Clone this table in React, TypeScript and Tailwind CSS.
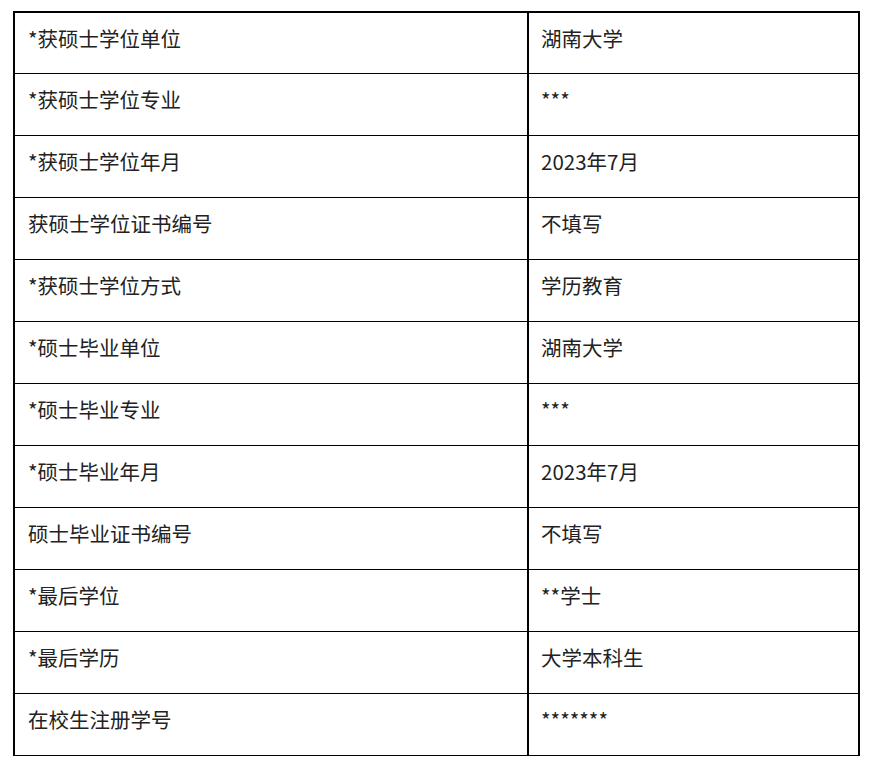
const rows: [string, string][] = [
  ['*获硕士学位单位', '湖南大学'],
  ['*获硕士学位专业', '***'],
  ['*获硕士学位年月', '2023年7月'],
  ['获硕士学位证书编号', '不填写'],
  ['*获硕士学位方式', '学历教育'],
  ['*硕士毕业单位', '湖南大学'],
  ['*硕士毕业专业', '***'],
  ['*硕士毕业年月', '2023年7月'],
  ['硕士毕业证书编号', '不填写'],
  ['*最后学位', '**学士'],
  ['*最后学历', '大学本科生'],
  ['在校生注册学号', '*******'],
];

export default function App() {
  return (
    <div className="min-h-screen bg-white pt-[11px] pl-[13px] font-['Noto_Sans_CJK_SC',sans-serif] text-[20.5px] leading-[30px] text-[#222]">
      <div className="w-[847px] border-x-2 border-t-2 border-b border-black">
        {rows.map(([label, value], i) => (
          <div
            key={i}
            className={
              i === 0
                ? 'flex h-[60px]'
                : 'flex h-[62px] border-t border-black'
            }
          >
            <div className="w-[514px] shrink-0 border-r-2 border-black pl-[13px] pt-[10px]">
              {label}
            </div>
            <div className="flex-1 pl-[12px] pt-[10px]">{value}</div>
          </div>
        ))}
      </div>
    </div>
  );
}
